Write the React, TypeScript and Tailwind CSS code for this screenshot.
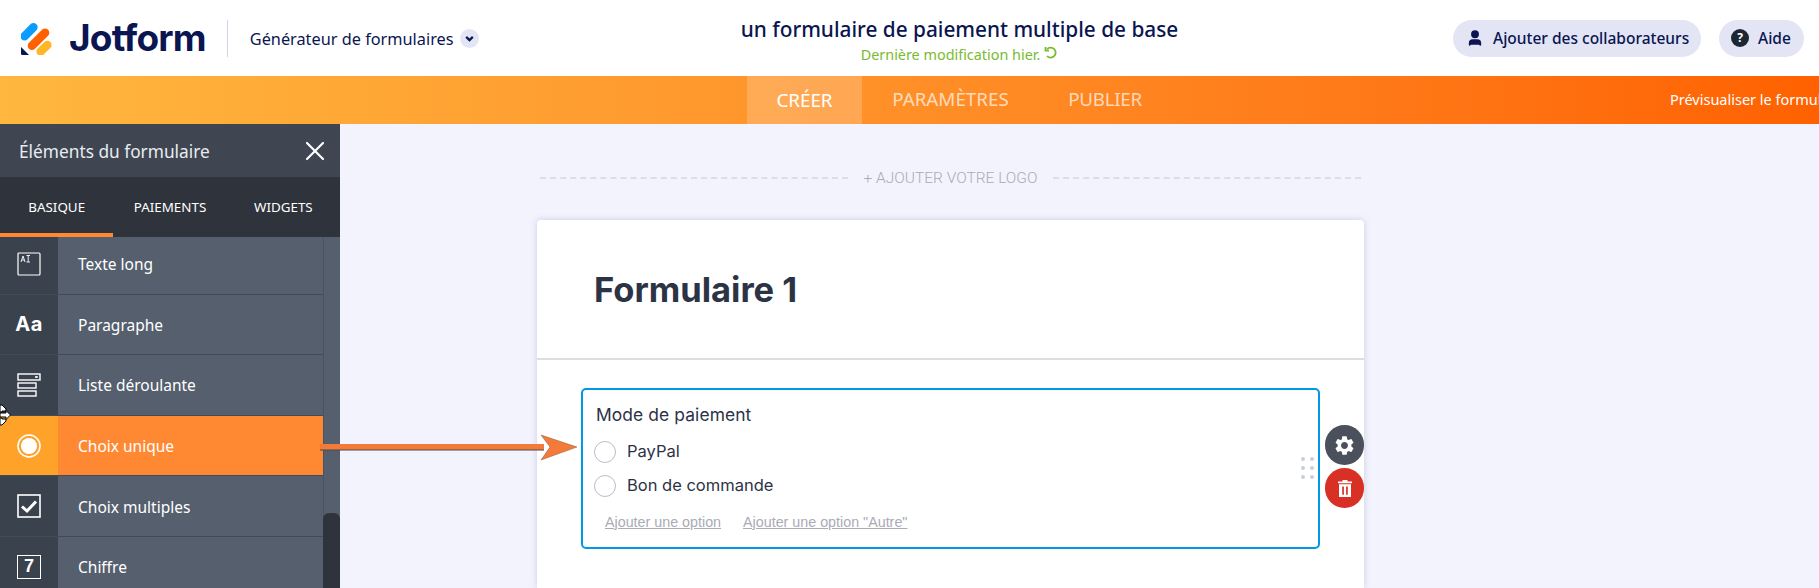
import { X, User } from 'lucide-react';
import { MdSettings } from 'react-icons/md';

const segoe = "font-['Noto_Sans',sans-serif]";

function LogoMark() {
    return (
        <svg width="31" height="34" viewBox="0 0 31 34" className="shrink-0">
            <rect x="-2.5" y="6.5" width="21" height="8.5" rx="4.25" transform="rotate(-45 8 10.75)" fill="#0a9cff" />
            <rect x="4" y="14" width="27" height="8.5" rx="4.25" transform="rotate(-45 17.5 18.25)" fill="#ff6100" />
            <rect x="14" y="23" width="18" height="8.5" rx="4.25" transform="rotate(-45 23 27.25)" fill="#ffb629" />
            <path d="M0 26 L8 34 H1.5 A1.5 1.5 0 0 1 0 32.5 Z" fill="#0a1551" />
        </svg>
    );
}

function TextLongIcon() {
    return (
        <svg width="24" height="24" viewBox="0 0 24 24" fill="none" stroke="#fff">
            <rect x="1" y="1" width="22" height="22" rx="1" strokeWidth="1.2" />
            <path d="M4 10 L6 4 L8 10 M4.8 8 H7.2 M9.5 3.5 H13 M11.2 3.5 V10 M9.5 10 H13" strokeWidth="0.9" />
        </svg>
    );
}

function DropdownIcon() {
    return (
        <svg width="24" height="24" viewBox="0 0 24 24" fill="none" stroke="#fff" strokeWidth="1.4">
            <rect x="1" y="1" width="22" height="6" />
            <rect x="1" y="10" width="18" height="5" />
            <rect x="1" y="18" width="18" height="5" />
            <rect x="18.5" y="3.2" width="2" height="1.6" fill="#fff" strokeWidth="0.4" />
        </svg>
    );
}

function RadioIcon() {
    return (
        <svg width="24" height="24" viewBox="0 0 24 24" fill="none">
            <circle cx="12" cy="12" r="11" stroke="#fff" strokeWidth="1.6" />
            <circle cx="12" cy="12" r="8" fill="#fff" />
        </svg>
    );
}

function CheckIcon() {
    return (
        <svg width="24" height="24" viewBox="0 0 24 24" fill="none">
            <rect x="1" y="1" width="22" height="22" stroke="#fff" strokeWidth="1.6" />
            <path d="M5 12.5 L10 17 L19 7.5" stroke="#fff" strokeWidth="3" />
        </svg>
    );
}

function NumberIcon() {
    return (
        <div className="w-6 h-6 border-[1.6px] border-white flex items-center justify-center text-white text-[18px] font-bold font-['Liberation_Sans',sans-serif]">
            7
        </div>
    );
}

function TrashIcon() {
    return (
        <svg width="14" height="18" viewBox="0 0 14 18">
            <path fillRule="evenodd" fill="#fff" d="M0 2.5 H4.5 V1 H9.5 V2.5 H14 V4.2 H0 Z M1 5.2 H13 V18 H1 Z M4.2 7.5 V15.8 H5.9 V7.5 Z M8.1 7.5 V15.8 H9.8 V7.5 Z" />
        </svg>
    );
}

const rows = [
    { label: 'Texte long', icon: <TextLongIcon /> },
    { label: 'Paragraphe', icon: <span className="text-white text-[20px] font-bold font-['Inter',sans-serif] tracking-[0.5px]">Aa</span> },
    { label: 'Liste déroulante', icon: <DropdownIcon /> },
    { label: 'Choix unique', icon: <RadioIcon />, active: true },
    { label: 'Choix multiples', icon: <CheckIcon /> },
    { label: 'Chiffre', icon: <NumberIcon /> },
];

function Sidebar() {
    return (
        <aside className={`w-[340px] shrink-0 flex flex-col ${segoe}`}>
            <div className="h-[53px] bg-[#3f4651] flex items-center justify-between pl-[19px] pr-[9px]">
                <span className="text-[#e8ecf2] text-[17.3px] pt-[2px]">Éléments du formulaire</span>
                <X size={32} strokeWidth={1.6} className="text-white" />
            </div>
            <div className="h-[60px] bg-[#2f333c] grid grid-cols-3 text-white text-[13.4px]">
                <div className="flex items-center justify-center border-b-4 border-[#ff8933] pt-1">BASIQUE</div>
                <div className="flex items-center justify-center border-b-4 border-transparent pt-1">PAIEMENTS</div>
                <div className="flex items-center justify-center border-b-4 border-transparent pt-1">WIDGETS</div>
            </div>
            <div className="flex-1 min-h-0 flex bg-[#555f6e] overflow-hidden">
                <div className="w-[324px] -mt-[3px] border-r border-[#4a5361]">
                    {rows.map((row) => (
                        <div key={row.label} className="h-[60.6px] flex border-b border-[#434b58]">
                            <div className={`w-[58px] flex items-center justify-center ${row.active ? 'bg-[#ffa229]' : 'bg-[#3a424e]'}`}>
                                {row.icon}
                            </div>
                            <div className={`flex-1 flex items-center pl-[20px] pt-[2px] text-white text-[15.5px] ${row.active ? 'bg-[#ff8933]' : ''}`}>
                                {row.label}
                            </div>
                        </div>
                    ))}
                </div>
                <div className="w-[17px] -ml-px flex flex-col justify-end">
                    <div className="h-[75px] bg-[#2f333c] rounded-t-[6px]" />
                </div>
            </div>
        </aside>
    );
}

function Radio({ label }: { label: string }) {
    return (
        <div className="h-[34px] flex items-center gap-[11px] pl-[11px]">
            <div className="w-[22px] h-[22px] rounded-full border border-[#b8bdc9] bg-white" />
            <span className="text-[16.5px] text-[#2c3345] pb-[2px]">{label}</span>
        </div>
    );
}

function FormCard() {
    return (
        <div className="w-[827px] flex-1 bg-white rounded-t-[4px] shadow-[0_0_6px_rgba(86,92,130,0.25)] font-['Inter',sans-serif]">
            <div className="h-[140px] flex items-center pl-[57px] pt-[2px] border-b-2 border-[#dcdde3]">
                <h1 className="text-[34.5px] font-bold text-[#2c3345]">Formulaire 1</h1>
            </div>
            <div className="pt-[28px] pl-[44px]">
                <div className="relative w-[739px] h-[161px] border-2 border-[#0099e5] rounded-[5px] pt-[13px]">
                    <div className="pl-[13px] text-[17.4px] text-[#2c3345] leading-[24px] mb-[8px] tracking-[0.1px]">Mode de paiement</div>
                    <Radio label="PayPal" />
                    <Radio label="Bon de commande" />
                    <div className="flex gap-[22px] pl-[22px] mt-[9px] text-[14.3px] text-[#a9abb5] underline font-['Liberation_Sans',sans-serif]">
                        <span>Ajouter une option</span>
                        <span>Ajouter une option "Autre"</span>
                    </div>
                    <div className="absolute right-[4px] top-[67px] grid grid-cols-2 gap-x-[5px] gap-y-[5px]">
                        {[0, 1, 2, 3, 4, 5].map((i) => (
                            <div key={i} className="w-[4px] h-[4px] rounded-full bg-[#c8ceda]" />
                        ))}
                    </div>
                    <div className="absolute left-[742px] top-[35px] flex flex-col gap-[3px]">
                        <div className="w-[39px] h-[40px] rounded-full bg-[#4a505c] flex items-center justify-center">
                            <MdSettings size={23} className="text-white" />
                        </div>
                        <div className="w-[39px] h-[40px] rounded-full bg-[#d93025] flex items-center justify-center">
                            <TrashIcon />
                        </div>
                    </div>
                </div>
            </div>
        </div>
    );
}

export default function App() {
    return (
        <div className="relative w-[1819px] h-[588px] overflow-hidden flex flex-col bg-[#f3f3fe]">
            <header className={`h-[76px] shrink-0 bg-white flex items-center text-[#0a1551] ${segoe}`}>
                <div className="w-[741px] shrink-0 flex items-center pl-[21px]">
                    <LogoMark />
                    <span className="ml-[17px] text-[37px] font-bold tracking-[-0.8px] font-['Inter',sans-serif]">Jotform</span>
                    <div className="ml-[21px] w-px h-[37px] bg-[#d3d6e8]" />
                    <span className="ml-[22px] text-[16.3px] pt-[2px]">Générateur de formulaires</span>
                    <div className="ml-[6px] w-[19px] h-[19px] rounded-full bg-[#e3e5f5] flex items-center justify-center">
                        <svg width="11" height="11" viewBox="0 0 10 10" fill="none" stroke="#0a1551" strokeWidth="2"><path d="M2 3.5 L5 6.5 L8 3.5" /></svg>
                    </div>
                </div>
                <div className="w-[437px] shrink-0 flex flex-col items-center pt-[3px]">
                    <span className="text-[20.8px] font-medium leading-[27px] whitespace-nowrap">un formulaire de paiement multiple de base</span>
                    <span className="flex items-start gap-1 text-[14.4px] leading-[18px] text-[#78bb2e] mt-[3px]">
                        Dernière modification hier.
                        <svg width="14" height="14" viewBox="0 0 14 14" fill="none" stroke="#78bb2e" strokeWidth="1.8"><path d="M3 3.2 A5 5 0 1 1 3 10" /><path d="M1.5 1 V4.6 H5" /></svg>
                    </span>
                </div>
                <div className="flex-1 flex items-center justify-end gap-[18px] pr-[15px]">
                    <div className="h-[37px] w-[248px] rounded-full bg-[#e3e5f5] flex items-center pl-[13px] gap-[9px]">
                        <User size={18} fill="#0a1551" strokeWidth={2.5} />
                        <span className="text-[15.5px] font-medium whitespace-nowrap pt-[2px]">Ajouter des collaborateurs</span>
                    </div>
                    <div className="h-[37px] w-[85px] rounded-full bg-[#e3e5f5] flex items-center pl-[12px] gap-[9px]">
                        <div className="w-[18px] h-[18px] rounded-full bg-[#1b2733] text-white text-[12px] font-bold flex items-center justify-center">?</div>
                        <span className="text-[15.5px] font-medium pt-[2px]">Aide</span>
                    </div>
                </div>
            </header>
            <nav className={`h-[48px] shrink-0 flex items-stretch pl-[747px] pb-px bg-linear-to-r from-[#ffb73f] to-[#ff6100] text-[18.8px] whitespace-nowrap ${segoe}`}>
                <div className="w-[115px] shrink-0 -mb-px flex items-center justify-center bg-white/20 text-white">CRÉER</div>
                <div className="ml-[30px] w-[117px] shrink-0 flex items-center justify-center text-white/70">PARAMÈTRES</div>
                <div className="ml-[60px] w-[72px] shrink-0 flex items-center justify-center text-white/70 tracking-[-0.3px]">PUBLIER</div>
                <div className="ml-[529px] shrink-0 flex items-center text-white text-[14.5px]">Prévisualiser le formulaire</div>
            </nav>
            <div className="flex-1 min-h-0 flex">
                <Sidebar />
                <main className="flex-1 flex flex-col pl-[197px]">
                    <div className="h-[96px] w-[828px] flex items-start pt-[44px] pl-[3px] pr-[4px] gap-4">
                        <div className="flex-1 mt-[9px] border-t-2 border-dashed border-[#dcdde6]" />
                        <span className="text-[15.5px] leading-[20px] font-light text-[#a9abb5] font-['Roboto',sans-serif]">+ AJOUTER VOTRE LOGO</span>
                        <div className="flex-1 mt-[9px] border-t-2 border-dashed border-[#dcdde6]" />
                    </div>
                    <FormCard />
                </main>
            </div>

            {/* annotation arrow over the page */}
            <svg width="260" height="30" viewBox="0 0 260 30" className="absolute left-[320px] top-[433px]">
                <path d="M0 11 H224 V17 H0 Z" fill="#f47a3a" />
                <path d="M0 17 H224" stroke="#4a4a4a" strokeWidth="1" />
                <path d="M221 2 L257 14 L221 27 L230 14 Z" fill="#f47a3a" stroke="#8a5a3a" strokeWidth="0.5" />
            </svg>
            {/* mouse cursor, cut by the window edge */}
            <svg width="12" height="22" viewBox="0 0 12 22" className="absolute left-0 top-[404px]">
                <path d="M0 1 H2 L6 5 V7 H2 V8 H0 Z M0 21 H2 L6 17 V15 H2 V14 H0 Z" fill="#fff" stroke="#000" strokeWidth="1" />
                <path d="M0 9 H6 V6.5 L10.5 11 L6 15.5 V13 H0 Z" fill="#fff" stroke="#000" strokeWidth="1" />
            </svg>
        </div>
    );
}
